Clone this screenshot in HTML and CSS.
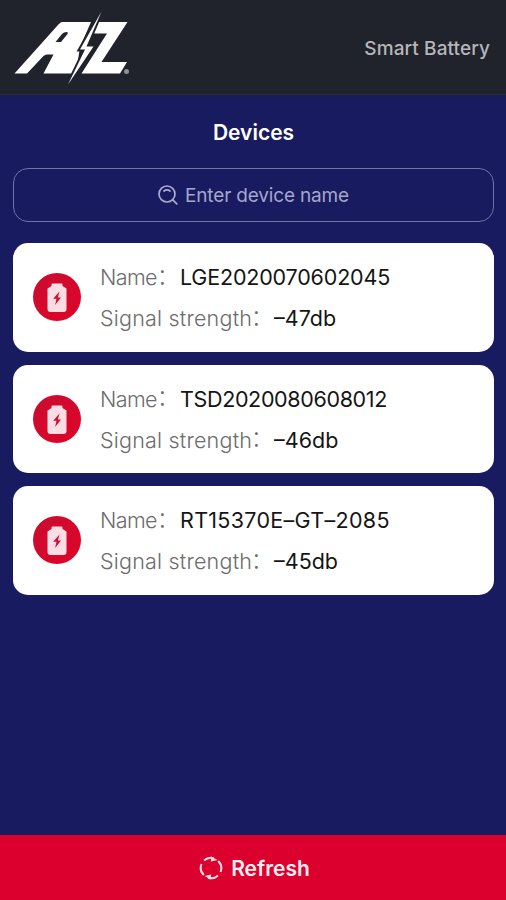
FILE: index.html
```html
<!DOCTYPE html>
<html lang="en">
<head>
<meta charset="utf-8">
<title>Smart Battery</title>
<link rel="stylesheet" href="styles.css">
</head>
<body>
<svg class="defs" aria-hidden="true">
  <symbol id="battery" viewBox="0 0 48 48">
    <path fill="#fbdde3" d="M19.500 10.500h9q1 0 1 1v1.500l4 2.500v20.500q0 3-3 3h-13q-3 0-3-3v-20.500l4-2.500v-1.500q0-1 1-1z"/>
    <path fill="#d20a2e" d="M26.500 18.500l-6.300 7.200h3.300l-1.400 6.300 5.900-7.600h-3.200z"/>
  </symbol>
</svg>
<div class="app">
  <header class="header">
    <svg class="logo" viewBox="0 0 120 76">
      <path fill="#fff" fill-rule="evenodd" d="M48 13H77L66 38L62 64.500H29.500L39.500 45.500H33Q31 45.500 29.500 47L13 64.500H0.500L43.500 16.500Q46.500 13 48 13zM52.500 23Q50 23 48 25L41.500 33H47L53.500 25Q54.500 23 52.500 23z"/>
      <path fill="#fff" d="M80.500 13H113.500L87.500 53H113L106 64.500H67.500L93 24.500H76z"/>
      <path fill="#fff" stroke="#20222c" stroke-width="4" paint-order="stroke" d="M87.500 2.500L66 40.500H71L54 75.500L79.500 37.500H72.500z"/>
      <circle cx="112.500" cy="62.500" r="2.500" fill="#8e9097"/>
    </svg>
    <div class="brand">Smart Battery</div>
  </header>
  <main class="main">
    <h1 class="title">Devices</h1>
    <div class="search">
      <svg class="search-icon" viewBox="0 0 20 20"><g fill="none" stroke="#a9abd0" stroke-width="1.700" stroke-linecap="round"><circle cx="9" cy="9" r="8"/><path d="M14.800 14.800l4 4M6 6q3-2.200 6 0"/></g></svg>
      <span class="placeholder">Enter device name</span>
    </div>
    <div class="list">
      <section class="card">
        <div class="badge"><svg viewBox="0 0 48 48"><use href="#battery"/></svg></div>
        <div class="info">
          <div class="row"><span class="label name">Name</span><span class="colon">：</span><span class="value id-a">LGE2020070602045</span></div>
          <div class="row"><span class="label signal">Signal strength</span><span class="colon">：</span><span class="value db">–47db</span></div>
        </div>
      </section>
      <section class="card">
        <div class="badge"><svg viewBox="0 0 48 48"><use href="#battery"/></svg></div>
        <div class="info">
          <div class="row"><span class="label name">Name</span><span class="colon">：</span><span class="value id-b">TSD2020080608012</span></div>
          <div class="row"><span class="label signal">Signal strength</span><span class="colon">：</span><span class="value db">–46db</span></div>
        </div>
      </section>
      <section class="card">
        <div class="badge"><svg viewBox="0 0 48 48"><use href="#battery"/></svg></div>
        <div class="info">
          <div class="row"><span class="label name">Name</span><span class="colon">：</span><span class="value id-c">RT15370E–GT–2085</span></div>
          <div class="row"><span class="label signal">Signal strength</span><span class="colon">：</span><span class="value db">–45db</span></div>
        </div>
      </section>
    </div>
  </main>
  <footer class="refresh">
    <svg class="refresh-icon" viewBox="0 0 24 24"><g fill="none" stroke="#ffe0e5" stroke-width="2"><path d="M4.800 19A10.200 10.200 0 0 1 2.500 8M5 4.600A10.200 10.200 0 0 1 15 2.300M19.200 5A10.200 10.200 0 0 1 21.500 16M19 19.400A10.200 10.200 0 0 1 9 21.700"/></g><path fill="#ffe0e5" d="M12 .5l6.500 3.500-6.500 1.500zM12 23.500l-6.500-3.500 6.500-1.500z"/></svg>
    <span>Refresh</span>
  </footer>
</div>
</body>
</html>
```
FILE: styles.css
```css
* { box-sizing: border-box; }
body { margin: 0; font-family: Inter, "Noto Sans CJK SC", sans-serif; }
.defs { display: none; }
.app { display: flex; flex-direction: column; width: 506px; height: 900px; background: #181b60; }
.header { display: flex; justify-content: space-between; align-items: center; height: 95px; padding: 0 16px 0 14px; background: #20222c; border-bottom: 1px solid #2c2e3c; }
.logo { width: 120px; height: 76px; }
.brand { padding-top: 2px; color: #b5b6ba; font-size: 19px; font-weight: 500; letter-spacing: 0.1px; }
.main { flex: 1; padding: 0 12px 0 13px; }
.title { margin: 0; height: 73px; line-height: 75px; text-align: center; color: #fff; font-size: 21px; font-weight: 600; }
.search { display: flex; align-items: center; justify-content: center; gap: 7px; height: 54px; border: 1px solid #7072a8; border-radius: 15px; }
.search-icon { width: 20px; height: 20px; }
.placeholder { color: #a4a6cc; font-size: 19px; letter-spacing: -0.17px; }
.list { display: flex; flex-direction: column; gap: 13px; margin-top: 21px; }
.card { display: flex; align-items: center; height: 108.500px; padding-left: 20px; background: #fff; border-radius: 15px; }
.badge { width: 48px; height: 48px; border-radius: 50%; background: linear-gradient(135deg, #c90c31, #df0428); }
.badge svg { display: block; width: 48px; height: 48px; }
.info { margin-left: 19px; }
.row { display: flex; align-items: center; height: 41px; padding-top: 1px; font-size: 21.500px; white-space: nowrap; }
.label { color: #6c6c6c; font-weight: 300; }
.name { width: 57px; letter-spacing: -0.6px; }
.signal { width: 151px; letter-spacing: 0.2px; }
.colon { width: 23px; padding-bottom: 6px; font-family: "Noto Sans CJK SC", sans-serif; font-weight: 300; color: #6c6c6c; }
.value { color: #151515; }
.id-a { letter-spacing: -0.18px; }
.id-b { letter-spacing: -0.35px; }
.id-c { letter-spacing: 0.3px; }
.refresh { display: flex; align-items: center; justify-content: center; gap: 8px; height: 65px; padding-left: 3px; padding-top: 1px; background: #db002d; color: #ffedf0; font-size: 21px; font-weight: 600; }
.refresh-icon { width: 24px; height: 24px; }
```
